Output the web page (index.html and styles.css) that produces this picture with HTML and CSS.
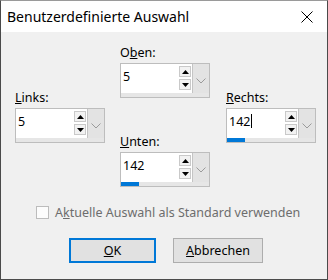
FILE: index.html
```html
<!DOCTYPE html>
<html lang="de">
<head>
    <meta charset="UTF-8">
    <title>Benutzerdefinierte Auswahl</title>
    <link rel="stylesheet" href="styles.css">
</head>
<body>

<div class="window">
    <div class="titlebar">
        <span class="title">Benutzerdefinierte Auswahl</span>
        <svg class="close" width="12" height="12" viewBox="0 0 12 12">
            <path d="M0.5 0.5 L11.5 11.5 M11.5 0.5 L0.5 11.5" stroke="#000" stroke-width="1" fill="none"/>
        </svg>
    </div>

    <div class="dialog">
        <div class="fields">
            <div class="col col-side">
                <div class="group">
                    <div class="label"><u>L</u>inks:</div>
                    <div class="spin">
                        <div class="spin-row">
                            <div class="spin-edit">5</div>
                            <div class="spin-arrows">
                                <div class="arrow"><svg width="7" height="4" viewBox="0 0 7 4"><path d="M3.5 0 L7 4 L0 4 Z" fill="#000"/></svg></div>
                                <div class="arrow"><svg width="7" height="4" viewBox="0 0 7 4"><path d="M0 0 L7 0 L3.5 4 Z" fill="#000"/></svg></div>
                            </div>
                            <div class="spin-drop"><svg width="10" height="6" viewBox="0 0 10 6"><path d="M0.5 0.5 L5 5 L9.5 0.5" stroke="#9a9a9a" fill="none"/></svg></div>
                        </div>
                        <div class="spin-track"></div>
                    </div>
                </div>
            </div>

            <div class="col col-mid">
                <div class="group">
                    <div class="label">O<u>b</u>en:</div>
                    <div class="spin">
                        <div class="spin-row">
                            <div class="spin-edit">5</div>
                            <div class="spin-arrows">
                                <div class="arrow"><svg width="7" height="4" viewBox="0 0 7 4"><path d="M3.5 0 L7 4 L0 4 Z" fill="#000"/></svg></div>
                                <div class="arrow"><svg width="7" height="4" viewBox="0 0 7 4"><path d="M0 0 L7 0 L3.5 4 Z" fill="#000"/></svg></div>
                            </div>
                            <div class="spin-drop"><svg width="10" height="6" viewBox="0 0 10 6"><path d="M0.5 0.5 L5 5 L9.5 0.5" stroke="#9a9a9a" fill="none"/></svg></div>
                        </div>
                        <div class="spin-track"></div>
                    </div>
                </div>
                <div class="group group-lower">
                    <div class="label"><u>U</u>nten:</div>
                    <div class="spin">
                        <div class="spin-row">
                            <div class="spin-edit">142</div>
                            <div class="spin-arrows">
                                <div class="arrow"><svg width="7" height="4" viewBox="0 0 7 4"><path d="M3.5 0 L7 4 L0 4 Z" fill="#000"/></svg></div>
                                <div class="arrow"><svg width="7" height="4" viewBox="0 0 7 4"><path d="M0 0 L7 0 L3.5 4 Z" fill="#000"/></svg></div>
                            </div>
                            <div class="spin-drop"><svg width="10" height="6" viewBox="0 0 10 6"><path d="M0.5 0.5 L5 5 L9.5 0.5" stroke="#9a9a9a" fill="none"/></svg></div>
                        </div>
                        <div class="spin-track"><div class="spin-fill" style="width: 18px"></div></div>
                    </div>
                </div>
            </div>

            <div class="col col-side col-right">
                <div class="group">
                    <div class="label"><u>R</u>echts:</div>
                    <div class="spin">
                        <div class="spin-row">
                            <div class="spin-edit">142<span class="caret"></span></div>
                            <div class="spin-arrows">
                                <div class="arrow"><svg width="7" height="4" viewBox="0 0 7 4"><path d="M3.5 0 L7 4 L0 4 Z" fill="#000"/></svg></div>
                                <div class="arrow"><svg width="7" height="4" viewBox="0 0 7 4"><path d="M0 0 L7 0 L3.5 4 Z" fill="#000"/></svg></div>
                            </div>
                            <div class="spin-drop"><svg width="10" height="6" viewBox="0 0 10 6"><path d="M0.5 0.5 L5 5 L9.5 0.5" stroke="#9a9a9a" fill="none"/></svg></div>
                        </div>
                        <div class="spin-track"><div class="spin-fill" style="width: 18px"></div></div>
                    </div>
                </div>
            </div>
        </div>

        <div class="check-row">
            <span class="checkbox"></span>
            <span class="check-label">A<u>k</u>tuelle Auswahl als Standard verwenden</span>
        </div>

        <div class="buttons">
            <div class="btn btn-default"><u>O</u>K</div>
            <div class="btn btn-wide"><u>A</u>bbrechen</div>
        </div>
    </div>
</div>

</body>
</html>
```

FILE: styles.css
```css
body {
    margin: 0;
    font-family: "Segoe UI", "Noto Sans", sans-serif;
    font-size: 12.5px;
    color: #000;
    background: #fff;
}
.window {
    width: 328px;
    height: 280px;
    box-sizing: border-box;
    border: 1px solid #4a4a4a;
    border-top-color: #9a9a9a;
    display: flex;
    flex-direction: column;
    background: #f0f0f0;
}
.titlebar {
    height: 31px;
    background: #fff;
    display: flex;
    align-items: center;
    justify-content: space-between;
    padding: 0 14px 0 6px;
    flex-shrink: 0;
}
.title {
    font-size: 14px;
    line-height: 20px;
}
.close {
    display: block;
}
.dialog {
    flex: 1;
    padding: 13px 0 0 14px;
}
.fields {
    display: flex;
}
.col {
    width: 90px;
}
.col-side {
    padding-top: 45px;
}
.col-mid {
    margin-left: 15px;
}
.col-right {
    margin-left: 16px;
}
.group-lower {
    margin-top: 36px;
}
.label {
    line-height: 15px;
    margin-bottom: 3px;
}
.spin {
    width: 90px;
    height: 35px;
    box-sizing: border-box;
    border: 1px solid #bdbdbd;
    background: #fff;
    display: flex;
    flex-direction: column;
}
.spin-row {
    flex: 1;
    display: flex;
}
.spin-edit {
    flex: 1;
    padding: 5px 0 0 2px;
    line-height: 16px;
}
.caret {
    display: inline-block;
    width: 1px;
    height: 14px;
    background: #000;
    vertical-align: -2px;
    margin-left: 1px;
}
.spin-arrows {
    width: 12px;
    display: flex;
    flex-direction: column;
    gap: 2px;
    padding-top: 2px;
    margin-right: 1px;
}
.arrow {
    height: 11px;
    box-sizing: border-box;
    border: 1px solid #c9c9c9;
    background: #f2f2f2;
    display: flex;
    align-items: center;
    justify-content: center;
}
.arrow svg {
    display: block;
}
.spin-drop {
    width: 17px;
    background: #e3e3e3;
    border-left: 1px solid #c4c4c4;
    display: flex;
    align-items: center;
    justify-content: center;
    padding-top: 4px;
    box-sizing: border-box;
}
.spin-drop svg {
    display: block;
}
.spin-track {
    height: 4px;
    background: #e6e6e6;
}
.spin-fill {
    height: 100%;
    background: #0078d7;
}
.check-row {
    display: flex;
    align-items: center;
    margin: 18px 0 0 21px;
    line-height: 15px;
}
.checkbox {
    width: 13px;
    height: 13px;
    box-sizing: border-box;
    border: 1px solid #bcbcbc;
    background: #fcfcfc;
    margin-right: 6px;
}
.check-label {
    color: #6d6d6d;
}
.buttons {
    display: flex;
    gap: 17px;
    margin: 18px 0 0 54px;
}
.btn {
    width: 87px;
    height: 25px;
    box-sizing: border-box;
    border: 1px solid #adadad;
    background: #e1e1e1;
    display: flex;
    align-items: center;
    justify-content: center;
    line-height: 15px;
}
.btn-wide {
    width: 90px;
}
.btn-default {
    border: 2px solid #0078d7;
}
```
